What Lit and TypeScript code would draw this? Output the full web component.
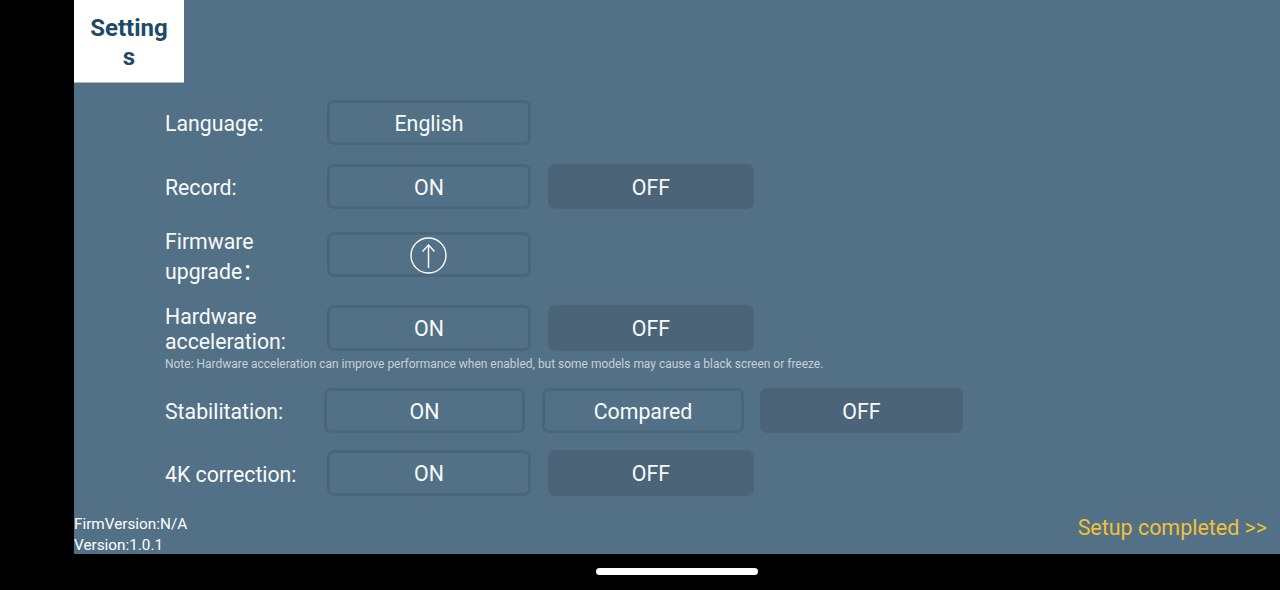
import { LitElement, html, css } from "lit";
import { customElement } from "lit/decorators.js";

@customElement("app-root")
export class AppRoot extends LitElement {
  static styles = css`
    :host { display: block; width: 1280px; height: 590px; background: #000; font-family: Roboto, sans-serif; color: #fff; overflow: hidden; }
    .screen { margin-left: 74px; width: 1206px; height: 554px; background: #537186; display: flex; flex-direction: column; position: relative; }
    .title { width: 110px; height: 83px; background: #fff; color: #1e4a68; font-size: 24px; font-weight: 700; line-height: 29px; text-align: center; word-break: break-all; padding: 14px 15px 0; box-sizing: border-box; border-bottom: 1px solid #a9b8c2; flex: none; }
    .rows { display: flex; flex-direction: column; padding-left: 91px; }
    .row { display: flex; align-items: center; flex: none; }
    .label { width: 162px; font-size: 21.25px; line-height: 25px; flex: none; padding-top: 2px; box-sizing: border-box; color: #f8fafb; }
    .btn { width: 204px; height: 45px; box-sizing: border-box; border: 3px solid #4a667a; border-radius: 7px; display: flex; align-items: center; justify-content: center; font-size: 21.33px; padding-top: 2px; margin-right: 17px; flex: none; color: #f8fafb; }
    .btn.off { background: #4b6478; border-color: #4b6478; width: 206px; }
    .language { margin-top: 17px; }
    .record { margin-top: 19px; }
    .firmware { margin-top: 23px; height: 45px; }
    .firmware .label { line-height: 30px; padding-top: 5px; }
    .firmware .btn { padding-top: 0; }
    .colon { font-family: "Noto Sans CJK SC", sans-serif; font-size: 21.33px; line-height: 1; }
    .hardware { margin-top: 28px; height: 46px; }
    .hardware .btn { height: 46px; padding-top: 1px; }
    .note { font-size: 11.97px; line-height: 14px; color: #c5d0d8; margin-top: 6px; height: 14px; }
    .stab { margin-top: 17px; height: 45px; }
    .stab .label { width: 159px; }
    .stab .btn { width: 201px; margin-right: 17px; }
    .stab .btn.wide { width: 202px; margin-right: 16px; }
    .stab .btn.off { width: 203px; }
    .k4 { margin-top: 17px; height: 46px; }
    .k4 .btn { height: 46px; padding-top: 1px; }
    .footer { position: absolute; left: 0; right: 0; bottom: 0; display: flex; justify-content: space-between; align-items: flex-end; }
    .versions { font-size: 15.3px; line-height: 21px; margin-bottom: -2px; }
    .done { font-size: 21.45px; color: #f2c037; margin: 0 13px 14px 0; }
    .home { position: absolute; left: 596px; top: 568px; width: 162px; height: 7px; border-radius: 4px; background: #fff; }
    svg { display: block; margin-left: -1px; margin-top: 1px; }
  `;

  render() {
    return html`
      <div class="screen">
        <div class="title">Settings</div>
        <div class="rows">
          <div class="row language"><div class="label">Language:</div><div class="btn">English</div></div>
          <div class="row record"><div class="label">Record:</div><div class="btn">ON</div><div class="btn off">OFF</div></div>
          <div class="row firmware"><div class="label">Firmware upgrade<span class="colon">：</span></div>
            <div class="btn">
              <svg width="37" height="37" viewBox="0 0 37 37" fill="none" stroke="#fff" stroke-width="1.4">
                <circle cx="18.5" cy="18.5" r="17.5"></circle>
                <path d="M18.5 31V8M12.5 14.5L18.5 8L24.5 14.5"></path>
              </svg>
            </div>
          </div>
          <div class="row hardware"><div class="label">Hardware acceleration:</div><div class="btn">ON</div><div class="btn off">OFF</div></div>
          <div class="note">Note: Hardware acceleration can improve performance when enabled, but some models may cause a black screen or freeze.</div>
          <div class="row stab"><div class="label">Stabilitation:</div><div class="btn">ON</div><div class="btn wide">Compared</div><div class="btn off">OFF</div></div>
          <div class="row k4"><div class="label">4K correction:</div><div class="btn">ON</div><div class="btn off">OFF</div></div>
        </div>
        <div class="footer">
          <div class="versions">FirmVersion:N/A<br />Version:1.0.1</div>
          <div class="done">Setup completed &gt;&gt;</div>
        </div>
      </div>
      <div class="home"></div>
    `;
  }
}
